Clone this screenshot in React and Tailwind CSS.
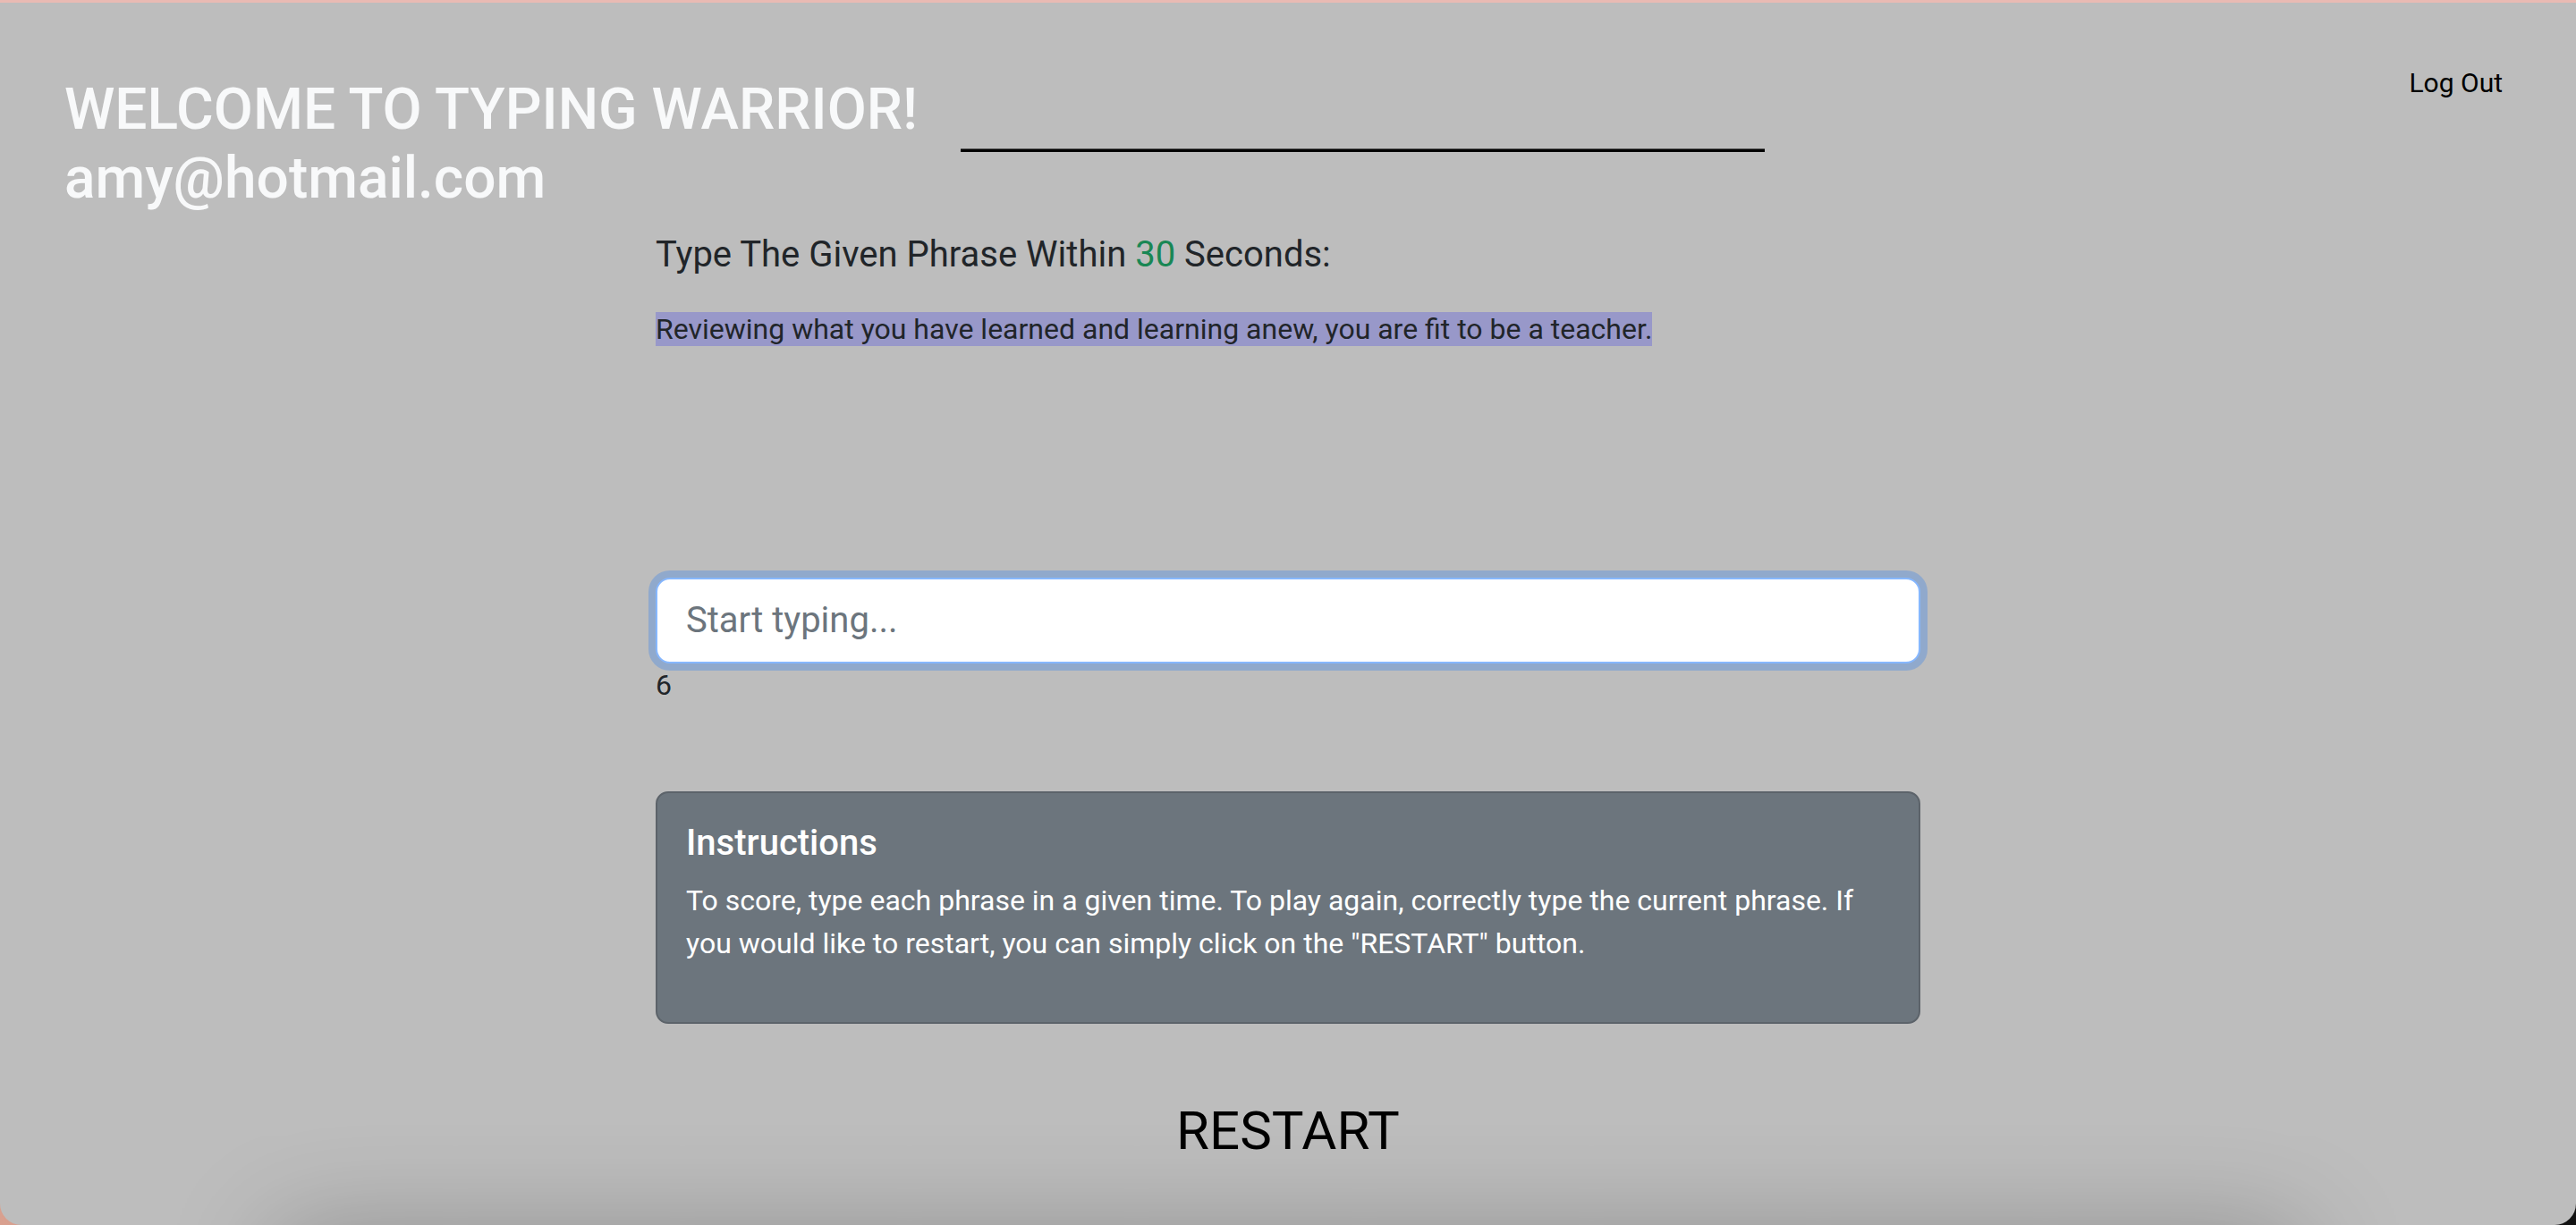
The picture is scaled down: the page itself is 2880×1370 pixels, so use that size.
import React from "react";

const font = { fontFamily: "Roboto, 'Liberation Sans', sans-serif" };

const Header = () => (
  <div className="flex items-start pl-[72px] pr-[82px] pt-[82px]">
    <div className="shrink-0 text-[64px] font-medium leading-[1.2] text-[#f8f9fa]">
      <div>WELCOME TO TYPING WARRIOR!</div>
      <div>amy@hotmail.com</div>
    </div>
    <div className="ml-[48px] mt-[81px] h-[4px] w-[899px] border-t border-[#555] bg-black" />
    <div className="flex-1" />
    <button className="mt-[-15px] text-[30px] leading-[1.5] text-black">Log Out</button>
  </div>
);

const Instructions = () => (
  <div className="mt-[95px] rounded-[14px] border-2 border-[#5c636a] bg-[#6c757d] p-[32px] text-white">
    <h5 className="mb-[16px] text-[40px] font-medium leading-[1.2]">Instructions</h5>
    <p className="mb-[32px] text-[32px] leading-[1.5]">
      To score, type each phrase in a given time. To play again, correctly type the current
      phrase. If you would like to restart, you can simply click on the "RESTART" button.
    </p>
  </div>
);

export default function App() {
  return (
    <div className="h-[1370px] w-full overflow-hidden bg-gradient-to-r from-[#d9a08f] via-[#6b5552] to-[#111]" style={font}>
      <div className="h-[1370px] overflow-hidden rounded-b-[24px] border-t-[3px] border-[#e9bab3] bg-[#bdbdbd]">
        <Header />

        <div className="mx-auto w-[1414px]">
          <h5 className="mt-[22px] text-[40px] leading-[1.2] text-[#212529]">
            Type The Given Phrase Within <span className="text-[#198754]">30</span> Seconds:
          </h5>
          <div className="mt-[35px] text-[32px] leading-[1.5] text-[#212529]">
            <span className="bg-[#9898c9]">
              Reviewing what you have learned and learning anew, you are fit to be a teacher.
            </span>
          </div>

          <input
            autoFocus
            placeholder="Start typing..."
            className="mt-[254px] block h-[96px] w-full rounded-[16px] border-2 border-[#86b7fe] bg-white px-[32px] text-[40px] text-[#212529] caret-black outline-none shadow-[0_0_0_8px_rgba(13,110,253,0.25)] placeholder:text-[#6c757d]"
            style={font}
          />
          <div className="text-[32px] leading-[1.5] text-[#212529]">6</div>

          <Instructions />

          <div className="mt-[75px] text-center text-[60px] leading-[1.5] text-black">RESTART</div>
        </div>

        <div className="mx-auto mt-[80px] h-[300px] w-[2240px] bg-[#bdbdbd] shadow-[0_0_120px_10px_rgba(0,0,0,0.26)]" />
      </div>
    </div>
  );
}
